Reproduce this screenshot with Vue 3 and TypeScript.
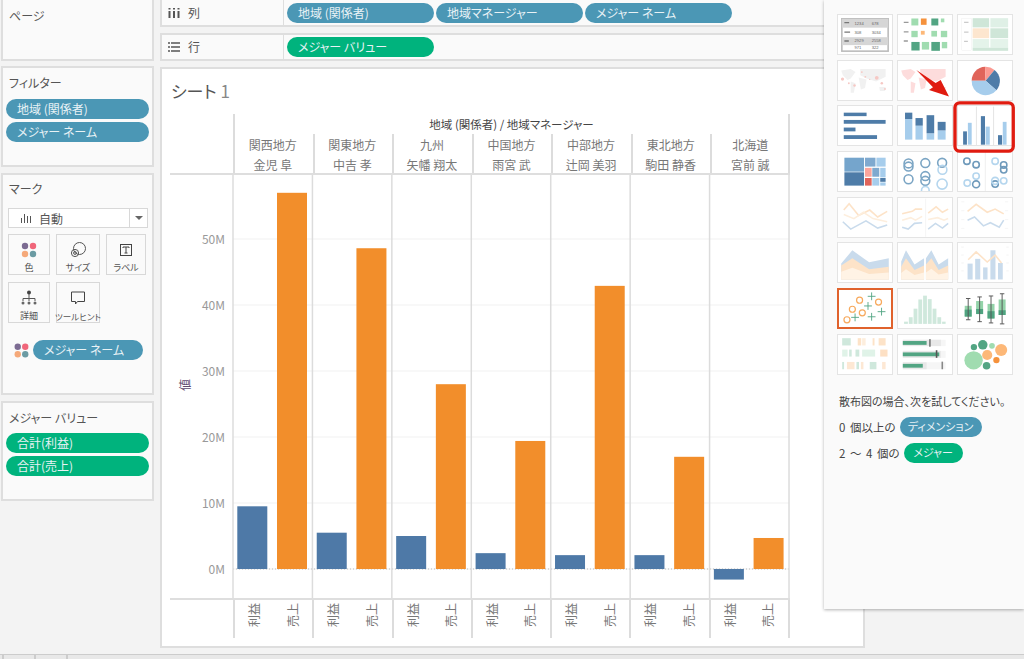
<template>
  <div class="app">
    <div class="main">
      <aside class="side">
        <section class="panel pages"><h3>ページ</h3></section>
        <section class="panel filters">
          <h3>フィルター</h3>
          <div class="pill blue">地域 (関係者)</div>
          <div class="pill blue">メジャー ネーム</div>
        </section>
        <section class="panel marks">
          <h3>マーク</h3>
          <div class="mark-select">
            <svg class="select-icon" width="12" height="12" viewBox="0 0 12 12"><path d="M1.5 6v5M4.5 2v9M7.5 4v7M10.5 4v7" stroke="#555" stroke-width="1" /></svg>
            <span>自動</span>
            <i class="caret"></i>
          </div>
          <div class="mark-cards">
            <div class="mark-card">
              <svg width="16" height="16" viewBox="0 0 16 16"><circle cx="4" cy="4" r="3.2" fill="#7c6b92" /><circle cx="12" cy="4" r="3.2" fill="#f0667a" /><circle cx="4" cy="12" r="3.2" fill="#f5a97a" /><circle cx="12" cy="12" r="3.2" fill="#6b9ba3" /></svg>
              <span>色</span>
            </div>
            <div class="mark-card">
              <svg width="16" height="16" viewBox="0 0 16 16" fill="none" stroke="#555"><circle cx="9.5" cy="6.5" r="6" /><circle cx="5" cy="11" r="3.6" /><circle cx="5" cy="11" r="1.4" /></svg>
              <span>サイズ</span>
            </div>
            <div class="mark-card">
              <svg width="16" height="16" viewBox="0 0 16 16" fill="none" stroke="#444"><rect x="2.5" y="2.5" width="11" height="11" /><path d="M5 6V5h6v1M8 5v6M6.5 11h3" /></svg>
              <span>ラベル</span>
            </div>
            <div class="mark-card">
              <svg width="16" height="16" viewBox="0 0 16 16"><circle cx="8" cy="2.5" r="2" fill="#444" /><path d="M8 4v4M2 11V8.5h12V11M8 8.5V11" fill="none" stroke="#555" /><circle cx="2" cy="13" r="1.5" fill="#666" /><circle cx="8" cy="13" r="1.5" fill="#666" /><circle cx="14" cy="13" r="1.5" fill="#666" /></svg>
              <span>詳細</span>
            </div>
            <div class="mark-card">
              <svg width="16" height="16" viewBox="0 0 16 16" fill="none" stroke="#444"><path d="M1.500 2h13v9.500H7.500l-2 2.500v-2.500h-4z" /></svg>
              <span class="tiny">ツールヒント</span>
            </div>
          </div>
          <div class="mark-field">
            <svg width="15" height="15" viewBox="0 0 16 16"><circle cx="4" cy="4" r="3.4" fill="#7c6b92" /><circle cx="12" cy="4" r="3.4" fill="#f0667a" /><circle cx="4" cy="12" r="3.4" fill="#f5a97a" /><circle cx="12" cy="12" r="3.4" fill="#6b9ba3" /></svg>
            <div class="pill blue">メジャー ネーム</div>
          </div>
        </section>
        <section class="panel measures">
          <h3>メジャー バリュー</h3>
          <div class="pill green">合計(利益)</div>
          <div class="pill green">合計(売上)</div>
        </section>
      </aside>

      <div class="center">
        <div class="shelf first">
          <div class="shelf-label">
            <svg width="12" height="10" viewBox="0 0 12 10"><path d="M1.500 3v7M6 3v7M10.500 3v7" stroke="#555" stroke-width="2" /><path d="M1.500 0v1.500M6 0v1.500M10.500 0v1.500" stroke="#555" stroke-width="2" /></svg>
            <span>列</span>
          </div>
          <div class="pill blue">地域 (関係者)</div>
          <div class="pill blue">地域マネージャー</div>
          <div class="pill blue">メジャー ネーム</div>
        </div>
        <div class="shelf">
          <div class="shelf-label">
            <svg width="12" height="10" viewBox="0 0 12 10"><path d="M0 1h2M3 1h9M0 5h2M3 5h9M0 9h2M3 9h9" stroke="#555" stroke-width="1.500" /></svg>
            <span>行</span>
          </div>
          <div class="pill green">メジャー バリュー</div>
        </div>

        <main class="sheet">
          <h1>シート <span class="sheet-no">1</span></h1>
          <div class="chart">
            <div class="caption">地域 (関係者) / 地域マネージャー</div>
            <div class="head-row">
              <div v-for="c in cells" :key="c.region" class="head-cell">
                <div>{{ c.region }}</div>
                <div>{{ c.manager }}</div>
              </div>
            </div>
            <svg class="plot" width="620" height="423" viewBox="170 175 620 423">
              <line v-for="t in ticks" :key="'g' + t" x1="233" x2="789" :y1="yOf(t)" :y2="yOf(t)" stroke="#f1f1f1" />
              <text v-for="t in ticks" :key="'t' + t" x="225" :y="yOf(t) + 4.500" text-anchor="end" class="tick">{{ t }}M</text>
              <text class="axis-title" transform="translate(190 385) rotate(-90)" text-anchor="middle">値</text>
              <line x1="233" x2="789" :y1="yOf(0)" :y2="yOf(0)" stroke="#bbb" stroke-dasharray="1 2" />
              <g v-for="(c, i) in cells" :key="c.region">
                <rect :x="cellX(i) + 4.300" :y="barY(c.profit)" width="30" :height="barH(c.profit)" fill="#4e79a7" />
                <rect :x="cellX(i) + 44" :y="barY(c.sales)" width="30" :height="barH(c.sales)" fill="#f28e2b" />
              </g>
              <line v-for="n in 8" :key="'v' + n" :x1="cellX(n - 1)" :x2="cellX(n - 1)" y1="175" y2="598" stroke="#dcdcdc" stroke-width="1.500" />
            </svg>
            <div class="foot-row">
              <div v-for="c in cells" :key="c.region" class="foot-cell">
                <span>利益</span>
                <span>売上</span>
              </div>
            </div>
          </div>
        </main>
      </div>
    </div>

    <div class="status">
      <i></i><i></i><i></i>
    </div>

    <div class="show-me">
      <div class="thumbs">
        <div class="thumb">
          <svg viewBox="22 42 166 123">
            <rect x="32" y="54" width="146" height="102" fill="#fff" stroke="#bbb" stroke-width="5" />
            <rect x="32" y="54" width="146" height="28" fill="#d6d6d6" />
            <rect x="32" y="112" width="146" height="25" fill="#d6d6d6" />
            <path d="M40 66h15M40 96h18M40 124h14" stroke="#777" stroke-width="4" />
            <g class="thumb-text">
              <text x="72" y="72">1234</text><text x="126" y="72">678</text>
              <text x="72" y="101">308</text><text x="126" y="101">3034</text>
              <text x="72" y="127">2929</text><text x="126" y="127">2558</text>
              <text x="72" y="150">971</text><text x="126" y="150">322</text>
            </g>
          </svg>
        </div>
        <div class="thumb">
          <svg viewBox="202 42 166 123">
            <path d="M218 65h15M218 95h15M218 124h13" stroke="#999" stroke-width="4" />
            <rect v-for="(s, i) in heatSquares" :key="i" :x="s[0]" :y="s[1]" :width="s[2]" :height="s[3]" :fill="s[4]" />
          </svg>
        </div>
        <div class="thumb">
          <svg viewBox="380 42 166 123">
            <rect x="390" y="52" width="30" height="103" fill="#fff" stroke="#e6e6e6" />
            <path d="M397 65h14M397 96h14M397 125h12" stroke="#bbb" stroke-width="3" />
            <rect x="424" y="52" width="52" height="29" fill="#cfe6d8" /><rect x="480" y="52" width="56" height="29" fill="#dff0e6" />
            <rect x="424" y="84" width="52" height="31" fill="#fde6cf" /><rect x="480" y="84" width="56" height="31" fill="#cfe6d8" />
            <rect x="424" y="118" width="52" height="27" fill="#e4f3ea" /><rect x="480" y="118" width="56" height="27" fill="#e4f3ea" />
            <rect x="424" y="145" width="112" height="10" fill="#cfe6d8" />
          </svg>
        </div>

        <div class="thumb">
          <svg viewBox="22 180 166 123">
            <path :d="mapPath" fill="#f1f1f1" />
            <g fill="#f6c8c4">
              <circle cx="34" cy="237" r="5" /><circle cx="54" cy="250" r="3" /><circle cx="72" cy="257" r="4" /><circle cx="95" cy="215" r="3" /><circle cx="106" cy="230" r="3" /><circle cx="142" cy="233" r="6" /><circle cx="158" cy="250" r="4" /><circle cx="168" cy="268" r="3" /><circle cx="120" cy="238" r="2" />
            </g>
          </svg>
        </div>
        <div class="thumb">
          <svg viewBox="22 180 166 123">
            <path :d="mapPath" fill="#fddcdc" />
          </svg>
        </div>
        <div class="thumb">
          <svg viewBox="380 180 166 123">
            <path d="M465 242L421 242A44 44 0 0 1 463 198Z" fill="#e0645a" />
            <path d="M465 242L463 198A44 44 0 0 1 493 208Z" fill="#fb9a92" />
            <path d="M465 242L493 208A44 44 0 0 1 499 272Z" fill="#4e7ca8" />
            <path d="M465 242L499 272A44 44 0 0 1 421 242Z" fill="#a6cdec" />
          </svg>
        </div>

        <div class="thumb">
          <svg viewBox="22 316 166 123" fill="#4e7ca8">
            <rect x="38" y="337" width="72" height="11" /><rect x="38" y="360" width="132" height="12" /><rect x="38" y="384" width="37" height="12" /><rect x="38" y="408" width="105" height="12" />
          </svg>
        </div>
        <div class="thumb">
          <svg viewBox="202 316 166 123">
            <g fill="#a6cdec"><rect x="222" y="357" width="23" height="65" /><rect x="255" y="378" width="23" height="44" /><rect x="290" y="402" width="24" height="20" /><rect x="325" y="393" width="25" height="29" /></g>
            <g fill="#4e7ca8"><rect x="222" y="337" width="23" height="20" /><rect x="255" y="354" width="23" height="24" /><rect x="290" y="345" width="24" height="57" /><rect x="325" y="366" width="25" height="27" /></g>
          </svg>
        </div>
        <div class="thumb">
          <svg viewBox="380 316 166 123">
            <path d="M436 318v122M490 318v122" stroke="#e4e4e4" stroke-width="3" />
            <g fill="#4e7ca8"><rect x="394" y="396" width="12" height="42" /><rect x="450" y="348" width="13" height="90" /><rect x="504" y="408" width="13" height="30" /></g>
            <g fill="#a6cdec"><rect x="409" y="369" width="12" height="69" /><rect x="465" y="381" width="13" height="57" /><rect x="519" y="366" width="12" height="72" /></g>
          </svg>
        </div>

        <div class="thumb">
          <svg viewBox="22 454 166 123">
            <rect v-for="(s, i) in treeRects" :key="i" :x="s[0]" :y="s[1]" :width="s[2]" :height="s[3]" :fill="s[4]" />
          </svg>
        </div>
        <div class="thumb">
          <svg viewBox="202 454 166 123" fill="none" stroke-width="5">
            <g stroke="#7ba5c4"><circle cx="233" cy="490" r="14" /><circle cx="233" cy="500" r="14" /><circle cx="286" cy="489" r="14" /><circle cx="339" cy="488" r="14" /><circle cx="233" cy="540" r="14" /><circle cx="286" cy="530" r="14" /><circle cx="286" cy="545" r="14" /></g>
            <g stroke="#b5d6ee"><circle cx="340" cy="510" r="14" /><circle cx="339" cy="555" r="16" /><circle cx="286" cy="575" r="12" /></g>
          </svg>
        </div>
        <div class="thumb">
          <svg viewBox="380 454 166 123" fill="none" stroke-width="5">
            <path d="M464 454v123" stroke="#eee" stroke-width="3" />
            <g stroke="#6f9abb"><circle cx="406" cy="483" r="10" /><circle cx="435" cy="494" r="10" /><circle cx="435" cy="556" r="11" /><circle cx="522" cy="495" r="10" /><circle cx="522" cy="510" r="10" /><circle cx="495" cy="555" r="10" /></g>
            <g stroke="#b5d6ee"><circle cx="435" cy="530" r="10" /><circle cx="407" cy="552" r="10" /><circle cx="495" cy="483" r="10" /><circle cx="495" cy="545" r="11" /><circle cx="522" cy="545" r="10" /></g>
          </svg>
        </div>

        <div class="thumb">
          <svg viewBox="22 20 166 123" fill="none" stroke-width="5">
            <polyline points="38,58 55,38 85,75 120,58 145,80 175,62" stroke="#fde3c8" />
            <polyline points="38,72 70,85 100,65 130,85 175,95" stroke="#fdeedd" />
            <polyline points="35,95 60,118 108,92 145,115 175,105" stroke="#c9dbec" />
          </svg>
        </div>
        <div class="thumb">
          <svg viewBox="202 20 166 123" fill="none" stroke-width="5">
            <path d="M287 22v120" stroke="#eee" stroke-width="2" />
            <polyline points="213,70 245,62 255,55 276,55" stroke="#fde3c8" />
            <polyline points="213,90 240,82 255,90 276,78" stroke="#fdeedd" />
            <polyline points="213,112 232,118 252,100 276,98" stroke="#c9dbec" />
            <polyline points="295,68 320,48 340,65 358,55" stroke="#fde3c8" />
            <polyline points="295,88 325,82 345,90 358,85" stroke="#fdeedd" />
            <polyline points="295,118 318,100 340,115 358,100" stroke="#c9dbec" />
          </svg>
        </div>
        <div class="thumb">
          <svg viewBox="380 20 166 123" fill="none" stroke-width="5">
            <path d="M388 32h10M388 60h10M388 88h10M388 116h10M526 32h10M526 60h10M526 88h10M526 116h10" stroke="#f0f0f0" stroke-width="2" />
            <polyline points="408,62 435,40 470,65 495,55 522,70" stroke="#fde3c8" />
            <polyline points="408,90 430,80 458,108 480,98 508,112 522,90" stroke="#c9dbec" />
          </svg>
        </div>

        <div class="thumb">
          <svg viewBox="22 157 166 123">
            <polygon points="30,222 65,180 118,218 180,205 180,272 30,272" fill="#c9dbec" />
            <polygon points="30,228 65,205 118,240 180,232 180,272 30,272" fill="#fde3c8" />
            <polygon points="30,248 65,235 118,255 180,250 180,272 30,272" fill="#fff3e5" />
          </svg>
        </div>
        <div class="thumb">
          <svg viewBox="202 157 166 123">
            <polygon points="210,215 225,180 252,225 282,205 282,272 210,272" fill="#c9dbec" />
            <polygon points="210,232 225,205 252,242 282,228 282,272 210,272" fill="#fde3c8" />
            <polygon points="210,252 225,240 252,258 282,250 282,272 210,272" fill="#fff3e5" />
            <polygon points="288,205 305,180 328,225 358,205 358,272 288,272" fill="#c9dbec" />
            <polygon points="288,225 305,205 328,242 358,228 358,272 288,272" fill="#fde3c8" />
            <polygon points="288,250 305,238 328,256 358,250 358,272 288,272" fill="#fff3e5" />
          </svg>
        </div>
        <div class="thumb">
          <svg viewBox="380 157 166 123">
            <path d="M388 170h8M388 195h8M388 220h8M388 245h8M530 170h8M530 195h8M530 220h8M530 245h8" stroke="#eee" stroke-width="2" />
            <g fill="#c9dbec"><rect x="408" y="222" width="16" height="50" /><rect x="432" y="207" width="16" height="65" /><rect x="457" y="234" width="14" height="38" /><rect x="480" y="180" width="16" height="92" /><rect x="504" y="220" width="15" height="52" /></g>
            <polyline points="410,210 435,185 470,217 495,195 515,220" fill="none" stroke="#fde3c8" stroke-width="5" />
          </svg>
        </div>

        <div class="thumb selected">
          <svg viewBox="22 295 166 123">
            <g fill="none" stroke="#f7a95c" stroke-width="4"><circle cx="87" cy="329" r="10" /><circle cx="150" cy="335" r="10" /><circle cx="63" cy="359" r="10" /><circle cx="96" cy="371" r="10" /><circle cx="45" cy="394" r="10" /></g>
            <path d="M114 316h26M127 303v26M102 348h26M115 335v26M59 386h26M72 373v26M114 384h26M127 371v26M147 367h26M160 354v26" stroke="#52a583" stroke-width="3" />
          </svg>
        </div>
        <div class="thumb">
          <svg viewBox="202 295 166 123" fill="#cfe8dc">
            <rect x="219" y="398" width="12" height="7" /><rect x="234" y="384" width="12" height="21" /><rect x="249" y="357" width="12" height="48" /><rect x="264" y="328" width="12" height="77" /><rect x="279" y="316" width="12" height="89" /><rect x="294" y="327" width="12" height="78" /><rect x="309" y="357" width="12" height="48" /><rect x="324" y="384" width="12" height="21" /><rect x="339" y="398" width="11" height="7" />
          </svg>
        </div>
        <div class="thumb">
          <svg viewBox="380 295 166 123">
            <g fill="#93d3a9"><rect x="399" y="348" width="22" height="34" /><rect x="435" y="333" width="22" height="41" /><rect x="471" y="342" width="22" height="46" /><rect x="506" y="328" width="22" height="49" /></g>
            <g fill="#4fa380"><rect x="399" y="360" width="22" height="22" /><rect x="435" y="358" width="22" height="16" /><rect x="471" y="365" width="22" height="23" /><rect x="506" y="362" width="22" height="15" /></g>
            <path d="M410 325v67M446 320v78M482 317v85M517 310v95M403 325h14M403 392h14M439 320h14M439 398h14M475 317h14M475 402h14M510 310h14M510 405h14" stroke="#555" stroke-width="3" />
          </svg>
        </div>

        <div class="thumb">
          <svg viewBox="22 432 166 123">
            <rect v-for="(s, i) in ganttRects" :key="i" :x="s[0]" :y="s[1]" :width="s[2]" :height="s[3]" :fill="s[4]" />
          </svg>
        </div>
        <div class="thumb">
          <svg viewBox="202 432 166 123">
            <rect x="215" y="447" width="135" height="20" fill="#f6f6f6" /><rect x="215" y="447" width="120" height="20" fill="#e8e8e8" />
            <rect x="215" y="482" width="135" height="22" fill="#f6f6f6" /><rect x="215" y="482" width="120" height="22" fill="#e8e8e8" />
            <rect x="215" y="518" width="135" height="22" fill="#f6f6f6" /><rect x="215" y="518" width="75" height="22" fill="#e8e8e8" />
            <rect x="215" y="451" width="75" height="12" fill="#52a583" /><rect x="215" y="487" width="115" height="12" fill="#52a583" /><rect x="215" y="523" width="63" height="12" fill="#52a583" />
            <rect x="298" y="445" width="5" height="24" fill="#777" /><rect x="319" y="480" width="5" height="24" fill="#555" /><rect x="337" y="516" width="5" height="24" fill="#888" />
          </svg>
        </div>
        <div class="thumb">
          <svg viewBox="380 432 166 123">
            <circle cx="427" cy="512" r="29" fill="#a0dcb0" /><circle cx="428" cy="470" r="10" fill="#52a583" /><circle cx="456" cy="463" r="15" fill="#52a583" /><circle cx="485" cy="466" r="9" fill="#a0dcb0" /><circle cx="514" cy="479" r="19" fill="#fdb878" /><circle cx="470" cy="495" r="16" fill="#fdb878" /><circle cx="499" cy="511" r="10" fill="#f5923c" /><circle cx="468" cy="529" r="12" fill="#52a583" />
          </svg>
        </div>

        <svg class="callout" viewBox="22 42 525 1081">
          <polygon points="260,210 318,249 333,240 358,290 298,270 310,262" fill="#e01b10" />
          <rect x="376" y="309" width="175" height="145" rx="14" fill="none" stroke="#e01b10" stroke-width="10" />
        </svg>
      </div>

      <p class="hint lead">散布図の場合、次を試してください。</p>
      <p class="hint row">0 個以上の <span class="pill blue small d">ディメンション</span></p>
      <p class="hint row">2 〜 4 個の <span class="pill green small m">メジャー</span></p>
    </div>
  </div>
</template>

<script setup lang="ts">
interface Cell {
  region: string
  manager: string
  profit: number
  sales: number
}

type Box = [number, number, number, number, string]

const cells: Cell[] = [
  { region: '関西地方', manager: '金児 阜', profit: 9.5, sales: 57 },
  { region: '関東地方', manager: '中吉 孝', profit: 5.5, sales: 48.6 },
  { region: '九州', manager: '矢幡 翔太', profit: 5, sales: 28 },
  { region: '中国地方', manager: '雨宮 武', profit: 2.4, sales: 19.4 },
  { region: '中部地方', manager: '辻岡 美羽', profit: 2.1, sales: 42.9 },
  { region: '東北地方', manager: '駒田 静香', profit: 2.1, sales: 17 },
  { region: '北海道', manager: '宮前 誠', profit: -1.6, sales: 4.7 },
]

const ticks = [0, 10, 20, 30, 40, 50]

const yOf = (v: number) => 569 - v * 6.6
const barY = (v: number) => Math.min(yOf(v), yOf(0))
const barH = (v: number) => Math.abs(v) * 6.6
const cellX = (i: number) => 233 + i * 79.43

const mapPath =
  'M30 210L60 205L75 215L60 235L50 240L35 225ZM60 245L75 250L70 280L60 280ZM90 205L170 205L170 230L140 245L110 235L90 225ZM85 232L110 238L105 265L92 270ZM150 262L170 262L168 275L152 275Z'

const heatSquares: Box[] = [
  [242, 53, 22, 22, '#a0dcb0'],
  [272, 53, 18, 20, '#f5923c'],
  [305, 53, 22, 22, '#52a583'],
  [335, 53, 11, 12, '#a0dcb0'],
  [242, 92, 20, 20, '#a0dcb0'],
  [272, 92, 12, 12, '#fdb878'],
  [305, 92, 18, 18, '#a0dcb0'],
  [335, 92, 20, 20, '#a0dcb0'],
  [242, 127, 26, 27, '#52a583'],
  [275, 127, 23, 24, '#a0dcb0'],
  [305, 127, 27, 28, '#52a583'],
  [338, 127, 17, 20, '#a0dcb0'],
]

const treeRects: Box[] = [
  [40, 472, 62, 44, '#75a5cc'],
  [40, 518, 62, 42, '#4e7ca8'],
  [105, 472, 33, 28, '#7fa9cf'],
  [141, 472, 29, 28, '#a6cdec'],
  [105, 504, 21, 28, '#fba59c'],
  [128, 504, 22, 28, '#7fa9cf'],
  [153, 504, 17, 30, '#a6cdec'],
  [105, 536, 21, 24, '#e0645a'],
  [128, 536, 22, 24, '#a6cdec'],
  [153, 536, 17, 12, '#4e7ca8'],
  [153, 550, 17, 10, '#a6cdec'],
]

const ganttRects: Box[] = [
  [33, 442, 27, 23, '#cfe8dc'],
  [82, 442, 11, 23, '#fde3c8'],
  [96, 442, 11, 23, '#fdeedd'],
  [129, 442, 6, 23, '#fde3c8'],
  [148, 442, 22, 23, '#fde3c8'],
  [33, 478, 17, 22, '#e0f3e8'],
  [55, 478, 8, 22, '#cfe8dc'],
  [75, 478, 12, 22, '#cfe8dc'],
  [96, 478, 41, 22, '#e0f3e8'],
  [153, 478, 23, 22, '#fde0c4'],
  [33, 517, 6, 23, '#cfe8dc'],
  [48, 517, 24, 23, '#fde8d4'],
  [78, 517, 8, 23, '#cfe8dc'],
  [92, 517, 8, 23, '#fde8d4'],
  [120, 517, 21, 23, '#cfe8dc'],
  [159, 517, 11, 23, '#fde8d4'],
]
</script>

<style>
html,
body {
  margin: 0;
  background: #f3f3f3;
}
</style>

<style scoped>
.app {
  position: relative;
  width: 1024px;
  height: 659px;
  overflow: hidden;
  font-family: "Noto Sans CJK JP", "Noto Sans", sans-serif;
  font-feature-settings: "palt";
  font-size: 12px;
  color: #555;
  background: #f3f3f3;
}

.main {
  display: flex;
  gap: 6px;
  height: 654px;
}

/* left column */
.side {
  display: flex;
  flex-direction: column;
  width: 153px;
  margin-left: 1px;
}

.panel {
  box-sizing: border-box;
  padding: 0 3px;
  background: #fafafa;
  border: 2px solid #dedede;
  margin-bottom: 6px;
}

.panel h3 {
  margin: 0 0 5px 3px;
  font-size: 12px;
  font-weight: 400;
  line-height: 18px;
}

.pages {
  height: 61px;
  margin-bottom: 5px;
  border-top: 0;
  padding-top: 7px;
}

.filters {
  height: 101px;
  padding-top: 6px;
}

.filters h3 {
  margin-bottom: 7px;
}

.marks {
  height: 222px;
  padding-top: 5px;
}

.measures {
  height: 100px;
  padding-top: 6px;
}

.measures h3 {
  margin-bottom: 6px;
}

.pill {
  box-sizing: border-box;
  height: 20px;
  line-height: 19px;
  padding-left: 11px;
  margin-bottom: 3px;
  border-radius: 10px;
  font-size: 12px;
  color: #e8f2f5;
  white-space: nowrap;
}

.blue {
  background: #4b97b5;
}

.green {
  background: #00b37d;
}

.mark-select {
  display: flex;
  align-items: center;
  box-sizing: border-box;
  height: 20px;
  margin: 10px 1px 6px 2px;
  padding-left: 11px;
  background: #fff;
  border: 1px solid #d8d8d8;
}

.select-icon {
  margin-right: 7px;
}

.caret {
  margin-left: auto;
  position: relative;
  width: 17px;
  height: 18px;
  border-left: 1px solid #d8d8d8;
}

.caret::after {
  content: "";
  position: absolute;
  left: 5px;
  top: 7px;
  border: 4px solid transparent;
  border-top: 4px solid #666;
  border-bottom: 0;
}

.mark-cards {
  display: grid;
  grid-template-columns: 42px 44px 40px;
  grid-auto-rows: 41px;
  gap: 7px 6px;
  margin-left: 2px;
}

.mark-card {
  display: flex;
  flex-direction: column;
  align-items: center;
  box-sizing: border-box;
  padding-top: 7px;
  background: #fafafa;
  border: 1px solid #d8d8d8;
  font-size: 9px;
  line-height: 16px;
}

.mark-card svg {
  flex: none;
}

.mark-card span {
  margin-top: 2px;
  white-space: nowrap;
}

.mark-card .tiny {
  font-size: 8.500px;
}

.mark-field {
  display: flex;
  align-items: center;
  gap: 4px;
  margin: 17px 0 0 8px;
}

.mark-field .pill {
  width: 110px;
  margin: 0;
}

/* centre */
.center {
  display: flex;
  flex-direction: column;
  width: 705px;
}

.shelf {
  display: flex;
  box-sizing: border-box;
  height: 28px;
  gap: 2px;
  padding-top: 2px;
  margin-bottom: 6px;
  background: #fafafa;
  border: 2px solid #dedede;
}

.shelf.first {
  height: 27px;
  padding-top: 3px;
  border-top: 0;
}

.shelf .pill {
  width: 147px;
}

.shelf-label {
  display: flex;
  align-items: center;
  gap: 8px;
  box-sizing: border-box;
  width: 122px;
  margin: -3px 1px 0 0;
  padding-left: 6px;
  border-right: 1px solid #dedede;
  font-size: 12px;
}

.sheet {
  box-sizing: border-box;
  height: 581px;
  padding: 10px 0 0 8px;
  background: #fff;
  border: 2px solid #dedede;
}

.sheet h1 {
  margin: 0 0 11px 1px;
  font-size: 17px;
  font-weight: 400;
  line-height: 24px;
}

.sheet-no {
  color: #888;
}

.chart {
  width: 620px;
}

.caption {
  box-sizing: border-box;
  height: 20px;
  margin-left: 63px;
  text-align: center;
  line-height: 21px;
  font-size: 11.500px;
  color: #444;
  border-left: 2px solid #dcdcdc;
  border-right: 2px solid #dcdcdc;
}

.head-row {
  display: flex;
  box-sizing: border-box;
  height: 41px;
  padding-left: 63px;
  border-bottom: 2px solid #dedede;
}

.head-cell {
  flex: 1;
  box-sizing: border-box;
  padding: 1px 2px 0 0;
  text-align: center;
  line-height: 20px;
  font-size: 12px;
  color: #777;
  border-left: 2px solid #dcdcdc;
}

.head-cell:last-child {
  padding-right: 0;
  border-right: 2px solid #dcdcdc;
}

.plot {
  display: block;
}

.tick {
  font-size: 12px;
  fill: #999;
}

.axis-title {
  font-size: 12px;
  fill: #5d4a6e;
}

.foot-row {
  display: flex;
  box-sizing: border-box;
  height: 40px;
  padding-left: 63px;
  border-top: 2px solid #dedede;
}

.foot-cell {
  flex: 1;
  display: flex;
  border-left: 2px solid #dcdcdc;
}

.foot-cell:last-child {
  border-right: 2px solid #dcdcdc;
}

.foot-cell span {
  flex: 1;
  display: flex;
  align-items: flex-start;
  justify-content: center;
  height: 30px;
  writing-mode: vertical-rl;
  text-orientation: sideways;
  transform: rotate(180deg);
  line-height: 38px;
  text-align: center;
  font-size: 12px;
  color: #777;
}

/* bottom bar */
.status {
  display: flex;
  box-sizing: border-box;
  height: 5px;
  padding-left: 2px;
  background: #e8e8e8;
  border-top: 1px solid #ccc;
}

.status i {
  width: 30px;
  border-left: 2px solid #ccc;
}

/* Show Me panel */
.show-me {
  position: absolute;
  top: 0;
  left: 824px;
  box-sizing: border-box;
  width: 200px;
  height: 609px;
  padding: 14px 0 0 13px;
  background: #fafafa;
  box-shadow: 0 1px 3px rgba(0, 0, 0, 0.3);
}

.thumbs {
  position: relative;
  display: grid;
  grid-template-columns: repeat(3, 56px);
  grid-auto-rows: 41px;
  gap: 4.700px 4px;
  width: 176px;
  height: 361px;
}

.thumb {
  box-sizing: border-box;
  background: #fff;
  border: 1px solid #e4e4e4;
  overflow: hidden;
}

.thumb svg {
  display: block;
  width: 100%;
  height: 100%;
}

.thumb.selected {
  border: 2px solid #e0622c;
}

.thumb-text {
  font-family: "Liberation Sans", sans-serif;
  font-size: 13px;
  fill: #666;
}

.callout {
  position: absolute;
  left: 0;
  top: 0;
  width: 175px;
  height: 360px;
  overflow: visible;
  pointer-events: none;
}

.hint {
  margin: 0;
  padding-left: 2px;
  font-size: 11.500px;
  line-height: 26px;
  color: #444;
}

.hint.lead {
  margin-top: 13px;
  font-size: 11px;
}

.hint.row {
  display: flex;
  align-items: center;
  gap: 4px;
  word-spacing: 2px;
}

.pill.small {
  height: 20px;
  margin: 0;
  padding: 0;
  text-align: center;
  font-size: 11px;
}

.pill.d {
  width: 82px;
}

.pill.m {
  width: 59px;
}
</style>
